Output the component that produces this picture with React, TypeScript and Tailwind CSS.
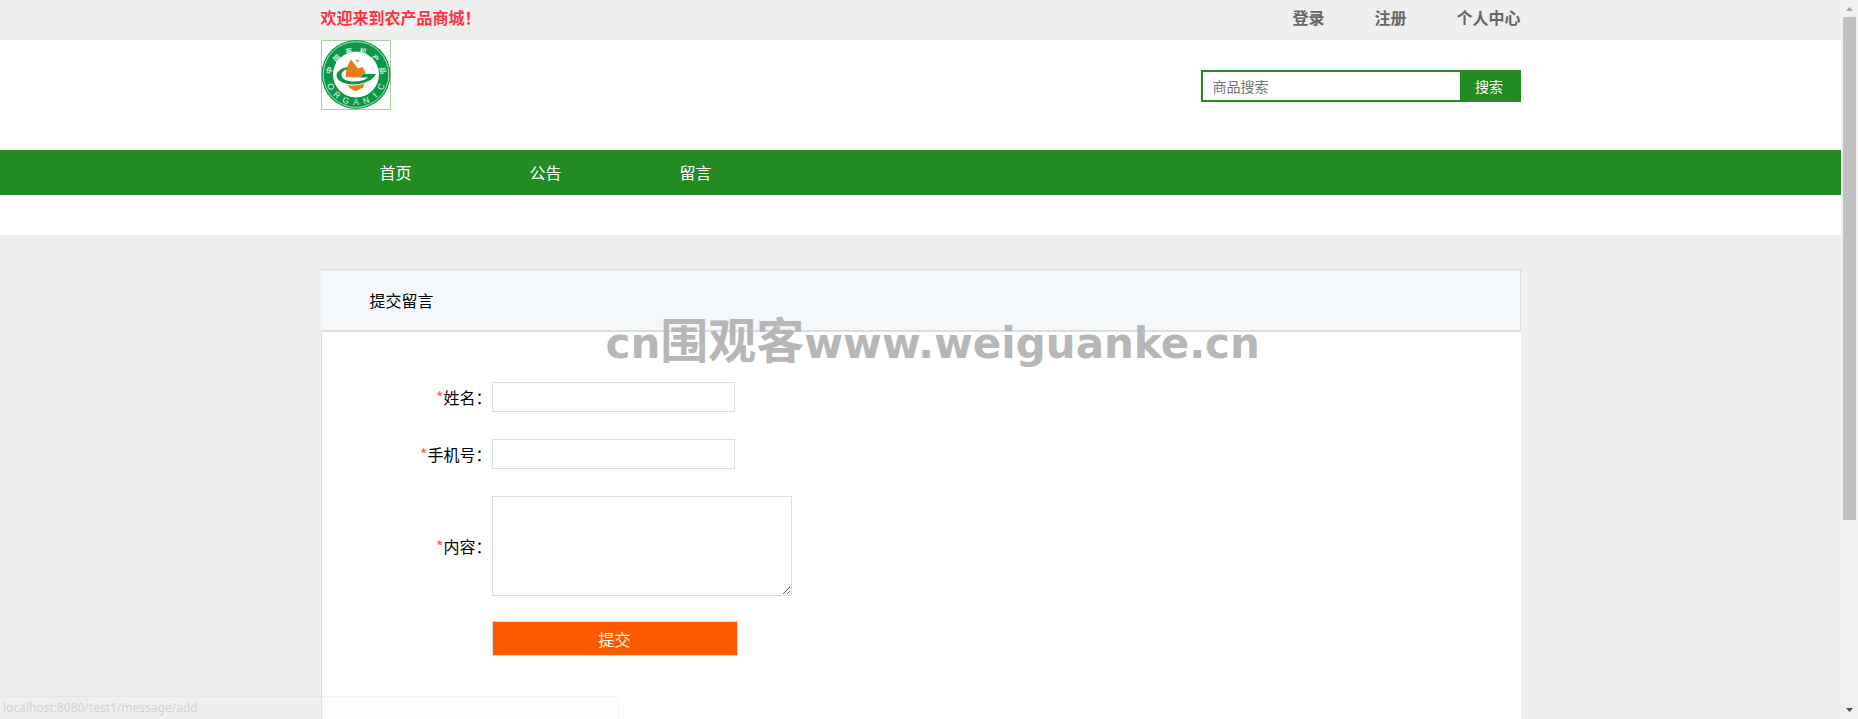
import { useState } from 'react'

const accountLinks = [
  { label: '登录', href: '#login' },
  { label: '注册', href: '#register' },
  { label: '个人中心', href: '#account' },
]

const navLinks = [
  { label: '首页', href: '#home' },
  { label: '公告', href: '#notice' },
  { label: '留言', href: '#message' },
]

function Logo() {
  return (
    <svg viewBox="0 0 70 70" className="h-[70px] w-[70px]" role="img" aria-label="中国有机产品">
      <rect x="0.5" y="0.5" width="69" height="69" fill="#fff" stroke="#a9cfa6" />
      <circle cx="35" cy="34.5" r="34.5" fill="#0a9748" />
      <circle cx="35" cy="34.5" r="32.8" fill="none" stroke="#d5eedd" strokeWidth="0.8" />
      <circle cx="35" cy="34.5" r="23" fill="#fff" />
      <defs>
        <path id="logo-top" d="M9.8 38 A25.2 25.2 0 1 1 60.2 38" />
        <path id="logo-bottom" d="M5 42 A31 31 0 0 0 65 42" />
      </defs>
      <g fill="#eefaf1" className="font-['Noto_Sans_CJK_SC',sans-serif]">
        <text fontSize="7" fontWeight="500">
          {['中', '国', '有', '机', '产', '品'].map((ch, i) => (
            <textPath key={ch} href="#logo-top" startOffset={`${9 + i * 16.4}%`} textAnchor="middle">
              {ch}
            </textPath>
          ))}
        </text>
      </g>
      <g fill="#e2f5e8" className="font-['Liberation_Sans',sans-serif]">
        <text fontSize="8.5">
          {['O', 'R', 'G', 'A', 'N', 'I', 'C'].map((ch, i) => (
            <textPath key={ch} href="#logo-bottom" startOffset={`${8 + i * 14}%`} textAnchor="middle">
              {ch}
            </textPath>
          ))}
        </text>
      </g>
      <path
        d="M29 26.5 C21 27.5 15.5 31 15.5 35.500 C15.5 42.500 27 45.500 38 44 C47 42.500 53 38.500 55 34 H42 L38.500 37.500 H47 C44 40 39 41.500 33 41.500 C26 41.500 20.500 39 20.500 35.200 C20.500 31.500 24 29.500 29 28.800Z"
        fill="#0a9748"
      />
      <path d="M24.500 37 L25.500 28 L30 19.500 L37 28.500 L41.500 27 L45 33.500 L42 34 L38 37.500Z" fill="#e87b1c" />
      <path d="M34.500 19 L38.500 21 L36.500 22.500Z" fill="#e87b1c" />
      <path d="M27 45 Q35 46.500 43.500 43.500 L42 47.500 L34.500 51.500 L28 47.500Z" fill="#e87b1c" />
    </svg>
  )
}

function TextRow({ id, label }: { id: string; label: string }) {
  return (
    <div className="flex items-center">
      <FieldLabel id={id} label={label} />
      <input id={id} name={id} type="text" className="h-[30px] w-[243px] border border-[#ddd] bg-white px-2 text-base outline-none" />
    </div>
  )
}

function FieldLabel({ id, label }: { id: string; label: string }) {
  return (
    <label htmlFor={id} className="w-[170px] shrink-0 text-right text-base">
      <span className="text-[#ff5555]">*</span>
      {label}：
    </label>
  )
}

// old style scrollbar column at the right of the window
function Scrollbar() {
  return (
    <div className="flex w-[17px] shrink-0 flex-col items-center bg-[#f0f0f0]" aria-hidden="true">
      <svg viewBox="0 0 17 17" className="h-[17px] w-[17px]">
        <path d="M5 11 L8.500 7 L12 11Z" fill="#a3a3a3" />
      </svg>
      <div className="flex w-full flex-1 flex-col items-center">
        <div className="h-[73.4%] w-[13px] bg-[#c1c1c1]" />
      </div>
      <svg viewBox="0 0 17 17" className="h-[17px] w-[17px]">
        <path d="M5 6 H12 L8.500 10Z" fill="#505050" />
      </svg>
    </div>
  )
}

export default function App() {
  const [keyword, setKeyword] = useState('')

  return (
    <div className="relative flex h-screen overflow-hidden bg-[#efefef] font-['Noto_Sans_CJK_SC',sans-serif] text-black">
      <div className="flex min-w-0 flex-1 flex-col">
        <header className="shrink-0 bg-white pb-10">
          <div className="bg-[#efefef]">
            <div className="mx-auto flex h-10 max-w-[1200px] justify-between text-base leading-[34px] font-bold">
              <p className="text-[#ff3344]">欢迎来到农产品商城！</p>
              <nav className="flex gap-[50px] text-[#666]">
                {accountLinks.map(({ label, href }) => (
                  <a key={href} href={href}>
                    {label}
                  </a>
                ))}
              </nav>
            </div>
          </div>

          <div className="mx-auto flex h-[110px] max-w-[1200px] items-start justify-between">
            <a href="#home">
              <Logo />
            </a>
            <form className="mt-[30px] flex h-8 w-80 border-2 border-[#228b22]" onSubmit={e => e.preventDefault()}>
              <input
                type="text"
                aria-label="商品搜索"
                placeholder="商品搜索"
                value={keyword}
                onChange={e => setKeyword(e.target.value)}
                className="min-w-0 flex-1 px-2.5 text-sm outline-none placeholder:text-[#757575]"
              />
              <button type="submit" className="w-[59px] bg-[#228b22] text-sm text-white">
                搜索
              </button>
            </form>
          </div>

          <nav className="bg-[#228b22]">
            <div className="mx-auto flex max-w-[1200px] text-center text-base leading-[45px] text-white">
              {navLinks.map(({ label, href }) => (
                <a key={href} href={href} className="w-[150px]">
                  {label}
                </a>
              ))}
            </div>
          </nav>
        </header>

        <main className="mx-auto mt-[34px] flex w-full max-w-[1200px] flex-1 flex-col">
          <div className="relative border-t border-r border-b-2 border-[#ddd] bg-[#f4f8fb]">
            <h1 className="pl-[49px] text-base leading-[60px]">提交留言</h1>
            <div className="pointer-events-none absolute top-[43px] left-[285px] flex items-baseline leading-[48px] font-bold whitespace-nowrap text-[#b7b7b7]">
              <span className="font-['DejaVu_Sans',sans-serif] text-[42px]">cn</span>
              <span className="text-[48px]">围观客</span>
              <span className="font-['DejaVu_Sans',sans-serif] text-[42px]">www.weiguanke.cn</span>
            </div>
          </div>
          <form className="flex-1 border-l border-[#ddd] bg-white pt-[50px]" onSubmit={e => e.preventDefault()}>
            <div className="flex flex-col gap-[27px]">
              <TextRow id="name" label="姓名" />
              <TextRow id="phone" label="手机号" />
              <div className="flex items-center">
                <FieldLabel id="content" label="内容" />
                <textarea id="content" name="content" className="h-[100px] w-[300px] resize border border-[#ddd] bg-white p-2 text-base outline-none" />
              </div>
            </div>
            <button type="submit" className="mt-[25px] ml-[170px] h-[35px] w-[246px] border border-[#ddd] bg-[#ff5a00] text-base text-white">
              提交
            </button>
          </form>
        </main>
      </div>

      <Scrollbar />

      <div className="absolute bottom-0 left-0 h-[23px] w-1/3 rounded-tr border-t border-r border-black/3 bg-[#f0f0f0]/20 pl-[3px] font-['Noto_Sans',sans-serif] text-xs leading-[22px] text-[#d4d4d4]">
        localhost:8080/test1/message/add
      </div>
    </div>
  )
}
